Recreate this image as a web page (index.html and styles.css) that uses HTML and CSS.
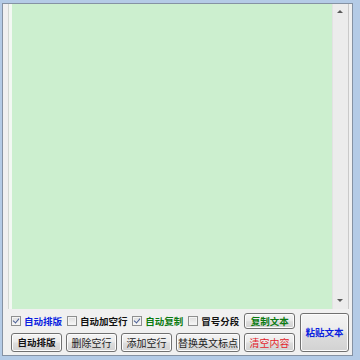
FILE: index.html
```html
<!DOCTYPE html>
<html lang="zh">
<head>
<meta charset="utf-8">
<link rel="stylesheet" href="styles.css">
</head>
<body>
<div class="client">
  <div class="editor">
    <div class="gutter"></div>
    <div class="text"></div>
    <div class="scrollbar">
      <span class="arrow up"></span>
      <span class="arrow down"></span>
    </div>
  </div>
  <div class="controls">
    <div class="left">
      <div class="row row1">
        <span class="cb checked"></span><span class="lbl bold blue">自动排版</span>
        <span class="cb"></span><span class="lbl bold">自动加空行</span>
        <span class="cb checked"></span><span class="lbl bold green">自动复制</span>
        <span class="cb"></span><span class="lbl bold">冒号分段</span>
        <button class="btn small bold green push">复制文本</button>
      </div>
      <div class="row row2">
        <button class="btn w51 bold dark">自动排版</button>
        <button class="btn w51">删除空行</button>
        <button class="btn w51">添加空行</button>
        <button class="btn w64">替换英文标点</button>
        <button class="btn w51 red">清空内容</button>
      </div>
    </div>
    <button class="btn paste bold blue">粘贴文本</button>
  </div>
</div>
</body>
</html>
```

FILE: styles.css
```css
html, body {
  margin: 0;
  padding: 0;
}
body {
  width: 360px;
  height: 360px;
  background: #b4cbe6;
  overflow: hidden;
  font-family: "Noto Sans CJK SC", "Noto Sans", sans-serif;
}
.client {
  box-sizing: border-box;
  margin: 3px 0 0 2px;
  width: 351px;
  height: 353px;
  border: 1px solid #8592a3;
  background: #f0f0f0;
}
.editor {
  display: flex;
  height: 305px;
  margin-left: 5px;
  margin-right: 3px;
}
.gutter {
  width: 3px;
  border-left: 1px solid #d2d6d2;
  background: #f3f8f3;
}
.text {
  flex: 1;
  background: #ccefcf;
}
.scrollbar {
  position: relative;
  width: 15px;
  background: #ececec;
  border-left: 1px solid #e2e2e2;
  border-right: 1px solid #c9c9c9;
}
.arrow {
  position: absolute;
  left: 4px;
  width: 0;
  height: 0;
  border-left: 3px solid transparent;
  border-right: 3px solid transparent;
}
.arrow.up {
  top: 6px;
  border-bottom: 3px solid #5a5a5a;
}
.arrow.down {
  bottom: 7px;
  border-top: 3px solid #5a5a5a;
}
.controls {
  display: flex;
  padding: 4px 0 0 8px;
}
.left {
  width: 284px;
  display: flex;
  flex-direction: column;
  gap: 4px;
}
.row {
  display: flex;
  align-items: center;
}
.row1 {
  height: 16px;
}
.row2 {
  gap: 4px;
  height: 19px;
}
.cb {
  box-sizing: border-box;
  width: 10px;
  height: 10px;
  border: 1px solid #8e8f8f;
  background: linear-gradient(#dcdcdc, #f8f8f8);
  box-shadow: inset 0 0 0 1px #f4f4f4;
  margin-right: 3px;
  position: relative;
}
.cb.checked::after {
  content: "";
  position: absolute;
  left: 2px;
  top: 0px;
  width: 3px;
  height: 5px;
  border-right: 1.5px solid #4a5f97;
  border-bottom: 1.5px solid #4a5f97;
  transform: rotate(40deg);
}
.lbl {
  font-size: 9.5px;
  line-height: 12px;
  margin-right: 5px;
  color: #111;
  white-space: nowrap;
}
.bold { font-weight: bold; }
.blue { color: #0a1ee0; }
.green { color: #0a7a10; }
.red { color: #e3242b; }
.dark { color: #111; }
.btn {
  box-sizing: border-box;
  height: 19px;
  padding: 0;
  border: 1px solid #707070;
  border-radius: 3px;
  background: linear-gradient(#f4f4f4 0%, #ebebeb 45%, #dddddd 55%, #d2d2d2 100%);
  box-shadow: inset 0 0 0 1px #fcfcfc;
  font-family: "Noto Sans CJK SC", "Noto Sans", sans-serif;
  font-size: 10px;
  line-height: 15px;
  color: #222;
  white-space: nowrap;
}
.btn.bold { font-size: 9.5px; }
.btn.dark { color: #111; }
.btn.blue { color: #0a1ee0; }
.btn.green { color: #0a7a10; }
.btn.red { color: #e3242b; }
.w51 { width: 51px; }
.w64 { width: 64px; }
.small {
  width: 51px;
  height: 16px;
  line-height: 12px;
}
.push { margin-left: auto; }
.paste {
  width: 49px;
  height: 39px;
  margin-left: 5px;
  margin-top: 0px;
}
```
